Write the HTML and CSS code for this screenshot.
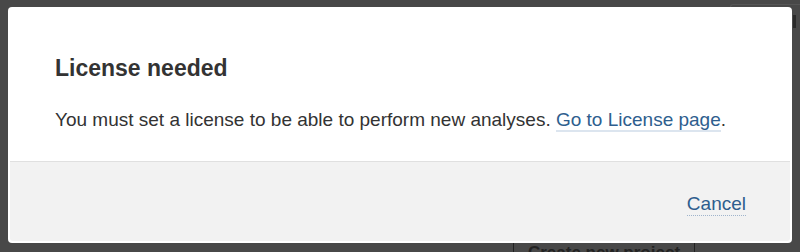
FILE: index.html
```html
<!DOCTYPE html>
<html>
<head>
<meta charset="utf-8">
<link rel="stylesheet" href="styles.css">
</head>
<body>
<div class="page">
  <div class="bg-box"></div>
  <div class="bg-tab"></div>
  <div class="bg-button">Create new project</div>
</div>
<div class="modal">
  <div class="modal-body">
    <h2 class="modal-title">License needed</h2>
    <p class="modal-text">You must set a license to be able to perform new analyses. <a class="link" href="#">Go to License page</a>.</p>
  </div>
  <div class="modal-footer">
    <a class="cancel" href="#">Cancel</a>
  </div>
</div>
</body>
</html>
```
FILE: styles.css
```css
html, body {
  margin: 0;
  padding: 0;
  width: 800px;
  height: 252px;
  overflow: hidden;
  background: #484848;
  font-family: "Liberation Sans", Arial, sans-serif;
}
.page {
  position: relative;
  width: 800px;
  height: 252px;
  overflow: hidden;
}
.bg-box {
  position: absolute;
  left: 730px;
  top: 4px;
  width: 80px;
  height: 40px;
  border-top: 1px solid #555;
  border-left: 1px solid #555;
  border-radius: 3px 0 0 0;
}
.bg-tab {
  position: absolute;
  left: 793px;
  top: 15px;
  width: 3px;
  height: 13px;
  background: #2a2a2a;
}
.bg-button {
  position: absolute;
  left: 513px;
  top: 238px;
  width: 180px;
  height: 30px;
  border-left: 1px solid #222;
  border-right: 1px solid #222;
  color: #222;
  font-size: 17px;
  font-weight: bold;
  text-align: center;
  line-height: 30px;
}
.modal {
  position: absolute;
  left: 8px;
  top: 7px;
  width: 780px;
  height: 234px;
  background: #fff;
  border-radius: 4px;
  padding: 0 2px 2px 2px;
  display: flex;
  flex-direction: column;
}
.modal-body {
  padding: 47px 45px 0 45px;
  height: 154px;
  box-sizing: border-box;
  flex: none;
}
.modal-title {
  margin: 0;
  font-size: 23px;
  line-height: 28px;
  font-weight: bold;
  color: #333;
}
.modal-text {
  margin: 26px 0 0 0;
  font-size: 19px;
  line-height: 24px;
  color: #333;
}
.link {
  color: #2e5e8e;
  text-decoration: none;
  border-bottom: 2px solid #dce5ef;
}
.modal-footer {
  flex: 1;
  background: #f2f2f2;
  border-top: 1px solid #e0e0e0;
  border-radius: 0 0 3px 3px;
  display: flex;
  justify-content: flex-end;
  align-items: center;
  padding: 6px 44px 0 0;
}
.cancel {
  font-size: 19px;
  color: #2e5e8e;
  text-decoration: none;
  border-bottom: 1px dotted #9fb4cc;
  line-height: 22px;
}
```
